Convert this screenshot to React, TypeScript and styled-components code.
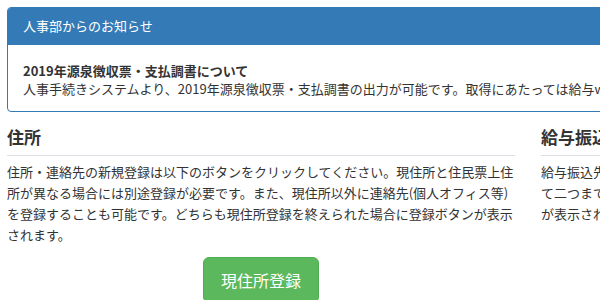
import React from "react";
import styled, {createGlobalStyle} from "styled-components";

const GlobalStyle = createGlobalStyle`
  html, body {
    margin: 0;
    padding: 0;
    background-color: #fff;
    overflow: hidden;
  }
  body {
    font-family: "Noto Sans CJK JP", "Noto Sans", sans-serif;
    color: #333;
  }
`;

const Page = styled.div`
  width: 1140px;
  padding: 7px;
`;

const Panel = styled.div`
  border: 1px solid #337ab7;
  border-radius: 4px;
  overflow: hidden;
  background-color: #fff;
`;

const PanelHeading = styled.div`
  background-color: #337ab7;
  color: #fff;
  font-size: 13px;
  line-height: 17px;
  padding: 9px 15px 11px;
`;

const PanelBody = styled.div`
  padding: 17px 15px 13px;
  font-size: 13px;
  line-height: 18px;
  white-space: nowrap;
`;

const NoticeTitle = styled.div`
  font-weight: bold;
`;

const Columns = styled.div`
  display: grid;
  grid-template-columns: 508px 508px;
  column-gap: 26px;
  margin-top: 15px;
`;

const Section = styled.section`
  display: flex;
  flex-direction: column;
`;

const SectionTitle = styled.h2`
  margin: 0;
  font-size: 17px;
  line-height: 20px;
  font-weight: bold;
  padding-bottom: 8px;
  border-bottom: 1px solid #dde0e4;
`;

const SectionText = styled.p`
  margin: 5px 0 0;
  font-size: 13px;
  line-height: 21px;
`;

const ButtonRow = styled.div`
  display: flex;
  justify-content: center;
  margin-top: 12px;
`;

const SuccessButton = styled.button`
  font-family: inherit;
  font-size: 16px;
  line-height: 24px;
  padding: 10px 17px;
  color: #fff;
  background-color: #5cb85c;
  border: 1px solid #4cae4c;
  border-radius: 6px;
  cursor: pointer;
`;

export default function App() {
    return (
        <Page>
            <GlobalStyle/>
            <Panel>
                <PanelHeading>人事部からのお知らせ</PanelHeading>
                <PanelBody>
                    <NoticeTitle>2019年源泉徴収票・支払調書について</NoticeTitle>
                    <div>人事手続きシステムより、2019年源泉徴収票・支払調書の出力が可能です。取得にあたっては給与web明細システムのパスワードが必要です。</div>
                </PanelBody>
            </Panel>
            <Columns>
                <Section>
                    <SectionTitle>住所</SectionTitle>
                    <SectionText>
                        住所・連絡先の新規登録は以下のボタンをクリックしてください。現住所と住民票上住所が異なる場合には別途登録が必要です。また、現住所以外に連絡先(個人オフィス等)を登録することも可能です。どちらも現住所登録を終えられた場合に登録ボタンが表示されます。
                    </SectionText>
                    <ButtonRow>
                        <SuccessButton>現住所登録</SuccessButton>
                    </ButtonRow>
                </Section>
                <Section>
                    <SectionTitle>給与振込先</SectionTitle>
                    <SectionText>
                        給与振込先の新規登録は以下のボタンをクリックしてください。振込先は口座を分割して二つまで登録することが可能です。すべての登録を終えられた場合に登録確認ボタンが表示されます。
                    </SectionText>
                    <ButtonRow>
                        <SuccessButton>振込先登録</SuccessButton>
                    </ButtonRow>
                </Section>
            </Columns>
        </Page>
    );
}
